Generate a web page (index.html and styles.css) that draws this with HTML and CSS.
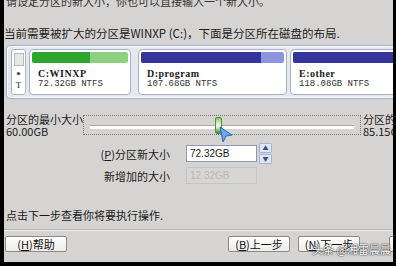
FILE: index.html
```html
<!DOCTYPE html>
<html>
<head>
	<meta charset="utf-8">
	<title>调整分区大小</title>
	<link rel="stylesheet" href="styles.css">
</head>
<body>
	<div class="window">
		<div class="intro">请设定分区的新大小，你也可以直接输入一个新大小。</div>
		<div class="note">当前需要被扩大的分区是WINXP (C:)，下面是分区所在磁盘的布局.</div>

		<div class="disk">
			<div class="legend"><div class="legend-box"></div><b>*</b><span>T</span></div>
			<div class="part part-c">
				<div class="bar"><div class="used" style="width:60%"></div></div>
				<div class="name">C:WINXP</div>
				<div class="size">72.32GB NTFS</div>
			</div>
			<div class="part part-d">
				<div class="bar"><div class="used" style="width:84%"></div></div>
				<div class="name">D:program</div>
				<div class="size">107.68GB NTFS</div>
			</div>
			<div class="part part-e">
				<div class="bar"><div class="used" style="width:100%"></div></div>
				<div class="name">E:other</div>
				<div class="size">118.08GB NTFS</div>
			</div>
		</div>

		<div class="slider-row">
			<div class="limit">分区的最小大小<br>60.00GB</div>
			<div class="slider">
				<div class="track"></div>
				<div class="thumb"></div>
				<svg class="cursor" width="16" height="18" viewBox="0 0 16 18">
					<path d="M2 1 L14 9 L8 10 L5 16 Z" fill="#6fa8e8" stroke="#2a64c0" stroke-width="1"/>
				</svg>
			</div>
			<div class="limit">分区的最大大小<br>85.15GB</div>
		</div>

		<div class="fields">
			<div class="field">
				<label>(<u>P</u>)分区新大小</label>
				<div class="input">72.32GB</div>
				<div class="spin"><span>▲</span><span>▼</span></div>
			</div>
			<div class="field">
				<label>新增加的大小</label>
				<div class="input disabled">12.32GB</div>
			</div>
		</div>

		<div class="hint">点击下一步查看你将要执行操作.</div>
		<div class="rule"></div>

		<div class="buttons">
			<button class="btn">(<u>H</u>)帮助</button>
			<div class="spacer"></div>
			<button class="btn">(<u>B</u>)上一步</button>
			<button class="btn">(<u>N</u>)下一步</button>
			<button class="btn cut"></button>
		</div>
		<div class="mark">头条 @湘雷晨晨</div>
	</div>
</body>
</html>
```

FILE: styles.css
```css
body{
	margin: 0;
	background: #000;
	width: 396px;
	height: 266px;
	overflow: hidden;
}
.window{
	position: relative;
	width: 389px;
	height: 262px;
	margin-left: 4px;
	background: #d6d4d2;
	overflow: hidden;
	display: flex;
	flex-direction: column;
	font-family: "Noto Sans CJK SC", sans-serif;
	font-size: 11px;
	color: #1a1a1a;
}
.intro{
	margin-top: -6px;
	padding-left: 2px;
	line-height: 14px;
	color: #333;
}
.note{
	margin-top: 18px;
	line-height: 14px;
	font-size: 11.5px;
}
.disk{
	display: flex;
	gap: 3px;
	margin: 5px -30px 0 2px;
	padding: 3px 4px;
	height: 46px;
	border: 1px solid #9ab0d4;
	border-radius: 4px;
	background: #e6e8ee;
	box-shadow: inset 0 0 0 1px #fff;
}
.legend{
	flex: none;
	width: 13px;
	display: flex;
	flex-direction: column;
	align-items: center;
	border: 1px solid #aab4c8;
	border-radius: 3px;
	background: #fff;
	font-family: "Liberation Serif", serif;
	font-size: 9px;
	line-height: 10px;
}
.legend-box{
	width: 8px;
	height: 11px;
	margin: 3px 0 4px;
	border: 1px solid #b8b8b8;
	background: #e8e8e8;
}
.part{
	flex: none;
	box-sizing: border-box;
	border: 1px solid #a4b0c8;
	border-radius: 4px;
	background: #fff;
	padding: 2px;
	font-family: "Liberation Mono", monospace;
	font-size: 9px;
	line-height: 11px;
}
.part-c{ width: 102px; }
.part-d{ width: 149px; margin-left: 4px; }
.part-e{ width: 130px; }
.bar{
	height: 11px;
	border-radius: 2px;
	margin-bottom: 5px;
	background: #8f94e0;
}
.bar .used{
	height: 100%;
	border-radius: 2px 0 0 2px;
	background: #34349a;
}
.part-c .bar{ background: #8ed07e; }
.part-c .used{ background: #2ea62e; }
.name{
	padding-left: 6px;
	font-family: "Liberation Serif", serif;
	font-weight: bold;
	font-size: 10px;
	letter-spacing: 0.5px;
}
.size{
	padding-left: 6px;
	color: #333;
}
.slider-row{
	display: flex;
	align-items: center;
	margin-top: 14px;
	padding-left: 2px;
}
.limit{
	width: 80px;
	line-height: 12px;
	font-size: 11px;
	white-space: nowrap;
}
.slider{
	position: relative;
	width: 276px;
	height: 18px;
	flex: none;
	border: 1px dotted #777;
	margin-right: 2px;
}
.track{
	margin: 9px 6px 0;
	height: 3px;
	background: #fff;
	border-top: 1px solid #aaa;
}
.thumb{
	position: absolute;
	left: 131px;
	top: 1px;
	width: 5px;
	height: 15px;
	border: 1px solid #5a8a3a;
	border-radius: 2px;
	background: linear-gradient(to bottom, #7ccb5a, #e6f4dc 40%, #e6f4dc 60%, #3f8c2b);
}
.cursor{
	position: absolute;
	left: 134px;
	top: 10px;
}
.fields{
	display: flex;
	flex-direction: column;
	gap: 3px;
	margin-top: 6px;
	padding-left: 94px;
}
.field{
	display: flex;
	align-items: center;
	gap: 2px;
}
.field label{
	box-sizing: border-box;
	width: 86px;
	text-align: right;
	padding-right: 14px;
	white-space: nowrap;
}
.input{
	width: 66px;
	height: 15px;
	padding-left: 3px;
	border: 1px solid #8a9ab8;
	background: #fff;
	font-family: "Liberation Sans", sans-serif;
	font-size: 10px;
	line-height: 15px;
}
.input.disabled{
	background: #d8d6d2;
	color: #b8b8b8;
	border-color: #c0c4cc;
}
.spin{
	display: flex;
	flex-direction: column;
	gap: 1px;
}
.spin span{
	width: 11px;
	height: 8px;
	font-size: 6px;
	line-height: 8px;
	text-align: center;
	color: #3a4a8a;
	background: #dfe6f4;
	border: 1px solid #a8b4cc;
	border-radius: 1px;
}
.hint{
	margin-top: 24px;
	padding-left: 2px;
	line-height: 14px;
}
.rule{
	margin-top: 7px;
	height: 1px;
	background: #b4b2b0;
	border-bottom: 1px solid #f2f2f2;
}
.buttons{
	display: flex;
	gap: 8px;
	margin-top: 5px;
	padding-left: 1px;
}
.spacer{ flex: 1; }
.btn{
	flex: none;
	width: 62px;
	height: 16px;
	padding: 0;
	border: 1px solid #8a8a8a;
	border-radius: 2px;
	background: linear-gradient(to bottom, #fff, #ecebe8);
	font-family: "Noto Sans CJK SC", sans-serif;
	font-size: 11px;
	line-height: 14px;
	color: #111;
}
.btn.cut{
	width: 20px;
	margin-left: 21px;
	margin-right: -16px;
}
.mark{
	position: absolute;
	right: 2px;
	bottom: 5px;
	font-size: 11px;
	color: #fff;
	text-shadow: 0 0 2px #333, 0 0 1px #000;
}
```
